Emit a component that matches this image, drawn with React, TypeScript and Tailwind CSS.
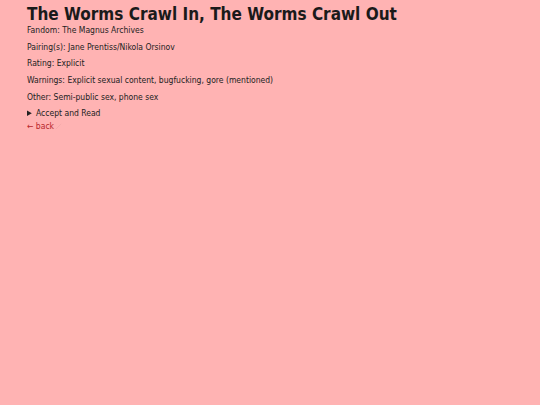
import React from 'react';

const meta = [
  ['Fandom', 'The Magnus Archives'],
  ['Pairing(s)', 'Jane Prentiss/Nikola Orsinov'],
  ['Rating', 'Explicit'],
  ['Warnings', 'Explicit sexual content, bugfucking, gore (mentioned)'],
  ['Other', 'Semi-public sex, phone sex'],
];

export default function App() {
  return (
    <div className="min-h-[405px] w-full bg-[#ffb3b3] px-[27px] pt-[3px] text-[#222] font-['DejaVu_Sans_Condensed','DejaVu_Sans',sans-serif]">
      <h1 className="text-[17px] font-bold leading-[22px] text-[#1a1a1a]">
        The Worms Crawl In, The Worms Crawl Out
      </h1>
      <div className="text-[8.5px] leading-[11px]">
        {meta.map(([label, value]) => (
          <p key={label} className="mb-[5.7px]">
            {label}: {value}
          </p>
        ))}
        <details className="mt-[5px]">
          <summary className="cursor-pointer">Accept and Read</summary>
        </details>
        <a href="#" className="mt-[2px] inline-flex items-center text-[#b8262b]">
          ← back
          <svg className="ml-[1px] h-[7px] w-[7px] text-[#f0a8a8]" viewBox="0 0 8 8" fill="none" stroke="currentColor" strokeWidth="0.8">
            <path d="M1 7 L7 1" />
          </svg>
        </a>
      </div>
    </div>
  );
}
